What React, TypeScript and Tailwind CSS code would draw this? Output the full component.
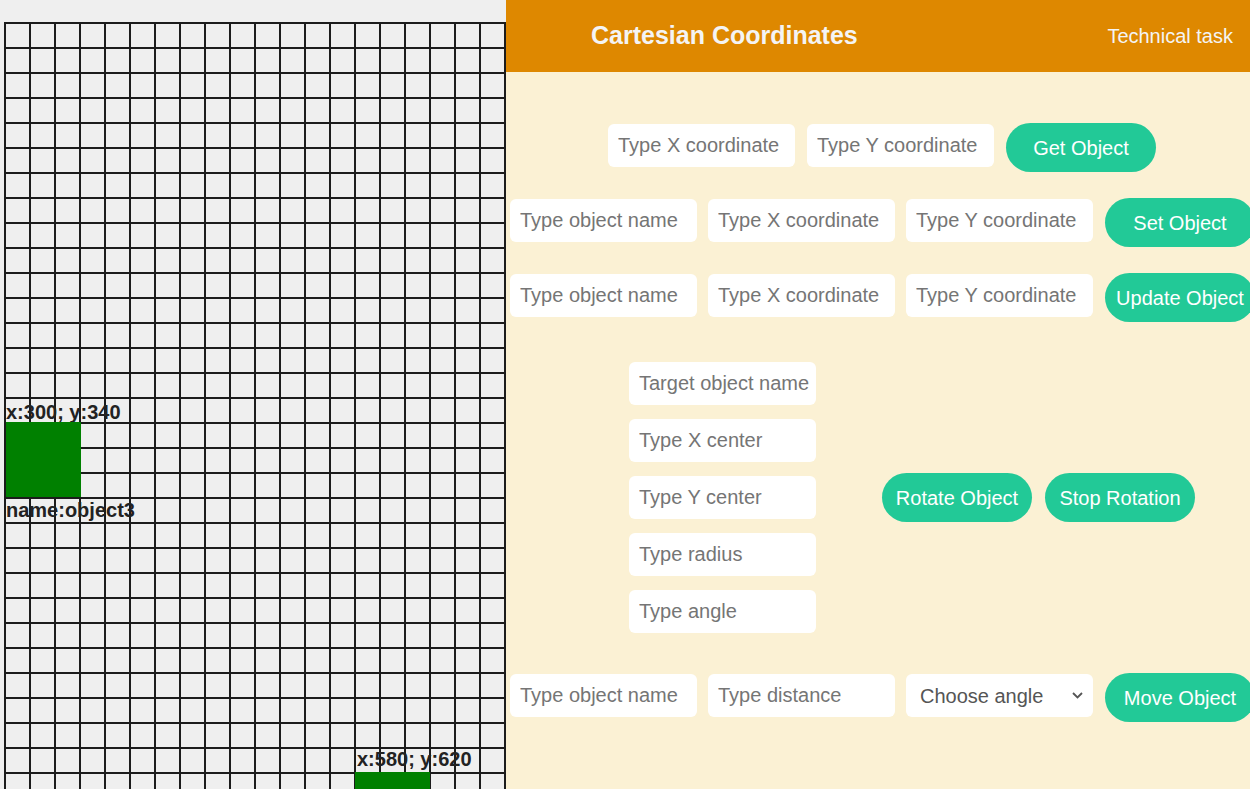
const FONT = { fontFamily: '"Liberation Sans", Arial, sans-serif' }

const COLS = Array.from({ length: 21 }, (_, i) => 5 + i * 25)
const ROWS = Array.from({ length: 31 }, (_, i) => 23 + i * 25)

function Grid() {
  return (
    <svg width="506" height="789" className="block">
      {COLS.map((x) => (
        <line key={'v' + x} x1={x} y1={22} x2={x} y2={789} stroke="#1c1c1c" strokeWidth={2} />
      ))}
      {ROWS.map((y) => (
        <line key={'h' + y} x1={4} y1={y} x2={506} y2={y} stroke="#1c1c1c" strokeWidth={2} />
      ))}
    </svg>
  )
}

function Field({ placeholder }: { placeholder: string }) {
  return (
    <input
      placeholder={placeholder}
      className="w-[187px] h-[43px] shrink-0 rounded-md bg-white pl-[10px] text-[20px] text-[#333] placeholder:text-[#757575] outline-none"
    />
  )
}

function Btn({ label }: { label: string }) {
  return (
    <button className="w-[150px] h-[49px] shrink-0 rounded-full bg-[#22c997] text-[20px] text-white">
      {label}
    </button>
  )
}

export default function App() {
  return (
    <div className="flex w-[1250px] h-[789px] overflow-hidden" style={FONT}>
      <div className="relative w-[506px] shrink-0 bg-[#efefef] overflow-hidden">
        <Grid />
        <div className="absolute left-[6px] top-[402px] text-[20px] leading-[20px] font-bold text-[#222] whitespace-nowrap">
          x:300; y:340
        </div>
        <div className="absolute left-[6px] top-[422px] w-[75px] h-[75px] bg-[#008000]" />
        <div className="absolute left-[6px] top-[500px] text-[20px] leading-[20px] font-bold text-[#222] whitespace-nowrap">
          name:object3
        </div>
        <div className="absolute left-[357px] top-[749px] text-[20px] leading-[20px] font-bold text-[#222] whitespace-nowrap">
          x:580; y:620
        </div>
        <div className="absolute left-[355px] top-[772px] w-[75px] h-[75px] bg-[#008000]" />
      </div>

      <div className="flex-1 flex flex-col bg-[#fbf1d4] overflow-hidden">
        <header className="h-[72px] shrink-0 flex items-center bg-[#de8800] pl-[85px] pr-[17px]">
          <h1 className="text-[25px] font-bold text-[#f4f4f4]">Cartesian Coordinates</h1>
          <span className="ml-auto text-[20px] text-[#f4f4f4]">Technical task</span>
        </header>

        <div className="mt-[51px] flex items-start gap-3 pl-[102px]">
          <div className="mt-[1px] flex gap-3">
            <Field placeholder="Type X coordinate" />
            <Field placeholder="Type Y coordinate" />
          </div>
          <Btn label="Get Object" />
        </div>

        <div className="mt-[26px] flex items-start gap-3 pl-[4px]">
          <div className="mt-[1px] flex gap-[11px]">
            <Field placeholder="Type object name" />
            <Field placeholder="Type X coordinate" />
            <Field placeholder="Type Y coordinate" />
          </div>
          <Btn label="Set Object" />
        </div>

        <div className="mt-[26px] flex items-start gap-3 pl-[4px]">
          <div className="mt-[1px] flex gap-[11px]">
            <Field placeholder="Type object name" />
            <Field placeholder="Type X coordinate" />
            <Field placeholder="Type Y coordinate" />
          </div>
          <Btn label="Update Object" />
        </div>

        <div className="mt-[40px] flex items-center pl-[123px]">
          <div className="flex flex-col gap-[14px]">
            <Field placeholder="Target object name" />
            <Field placeholder="Type X center" />
            <Field placeholder="Type Y center" />
            <Field placeholder="Type radius" />
            <Field placeholder="Type angle" />
          </div>
          <div className="ml-[66px] flex gap-[13px]">
            <Btn label="Rotate Object" />
            <Btn label="Stop Rotation" />
          </div>
        </div>

        <div className="mt-[40px] flex items-start gap-3 pl-[4px]">
          <div className="mt-[1px] flex gap-[11px]">
            <Field placeholder="Type object name" />
            <Field placeholder="Type distance" />
            <div className="relative w-[187px] h-[43px] shrink-0">
              <select className="w-full h-full appearance-none rounded-md bg-white pl-[14px] text-[20px] text-[#555] outline-none">
                <option>Choose angle</option>
                <option>0</option>
                <option>90</option>
                <option>180</option>
                <option>270</option>
              </select>
              <svg
                className="pointer-events-none absolute right-[10px] top-[18px]"
                width="11"
                height="7"
                viewBox="0 0 11 7"
                fill="none"
                stroke="#555"
                strokeWidth="1.8"
              >
                <path d="M1 1l4.5 4.5L10 1" />
              </svg>
            </div>
          </div>
          <Btn label="Move Object" />
        </div>
      </div>
    </div>
  )
}
